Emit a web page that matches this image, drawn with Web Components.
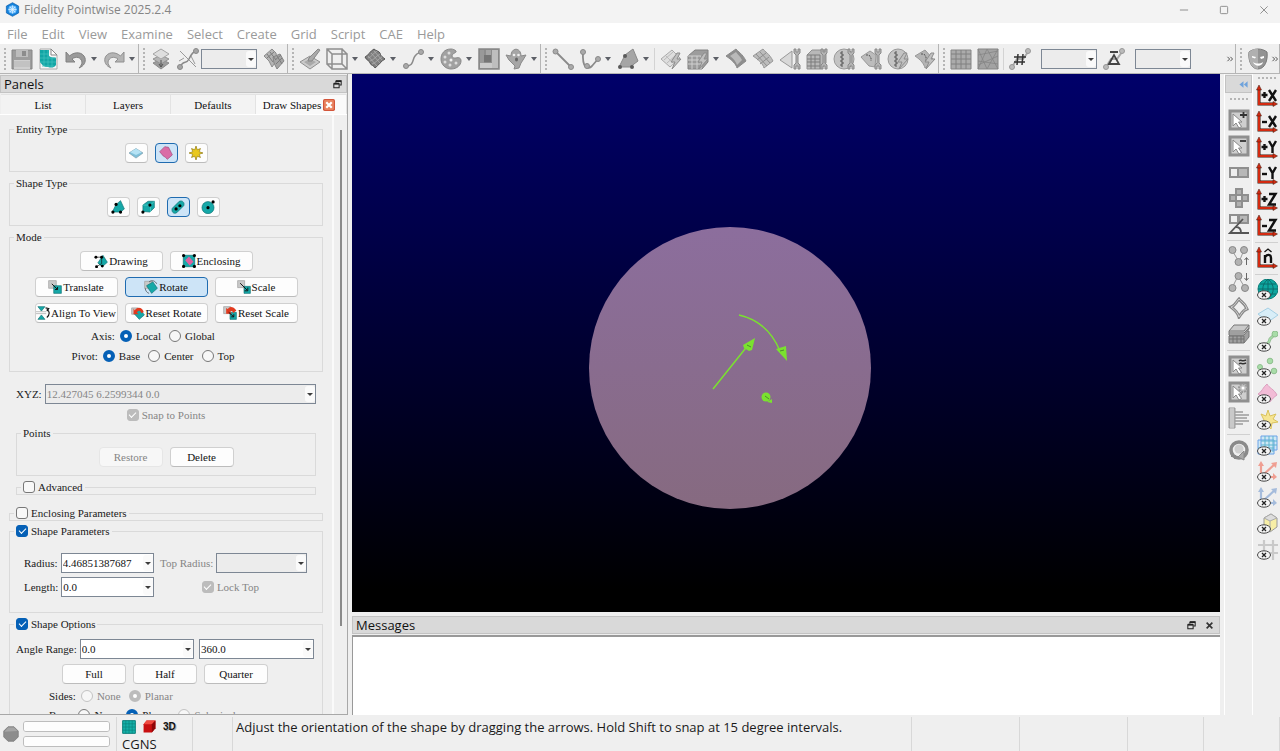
<!DOCTYPE html>
<html lang="en">
<head>
<meta charset="utf-8">
<title>Fidelity Pointwise 2025.2.4</title>
<style>
  html, body { margin: 0; height: 100%; }
  body {
    background: #efefef; color: #1a1a1a; overflow: hidden;
    font: 13px/18px "Open Sans", "Noto Sans", sans-serif;
    --form-font: 11px/14px "Liberation Serif", serif;
  }
</style>
</head>
<body>
<app-window></app-window>
<script>
/* ---------- icon artwork, all on a 22 x 22 grid ---------- */
const wrench = '<path d="M13 1v4l2 2v8l-2 2v4h2v-3h2v3h2v-4l-2-2V7l2-2V1h-2v3h-2V1z" transform="translate(2 0)" fill="#b4b4b4" stroke="#8a8a8a"/>';
const bolt = '<path d="M17 5l-6 9h4l-3 7 9-10h-4l3-6z" fill="#c0c0c0" stroke="#8c8c8c"/>';
const zip = '<path d="M9 3v16M7 5h2M9 7h2M7 9h2M9 11h2M7 13h2M9 15h2M7 17h2" stroke="#555" stroke-width="1" fill="none"/>';
const eye = '<ellipse cx="8" cy="16" rx="6.5" ry="4.2" fill="#f4f4f4" stroke="#444"/><path d="M6 14l4 4M10 14l-4 4" stroke="#222" stroke-width="1.3"/>';
const axis = t => `<path d="M3 4v15h15" fill="none" stroke="#3a1408" stroke-width="3"/><path d="M3 4v15h15" fill="none" stroke="#d42a10" stroke-width="2"/><path d="M0.500 5L3 0l2.500 5zM17 16.500l4.500 2.500-4.500 2.500z" fill="#d42a10" stroke="#3a1408" stroke-width=".5"/>${t}`;
const gX = '<path d="M13 5l7 11M20 5l-7 11"/>', gY = '<path d="M13 4l3.500 6 3.500-6M16.500 10v6"/>', gZ = '<path d="M13 5h6.500l-6.500 10.500h7"/>';
const plus = '<path d="M5.500 10h6M8.500 7v6"/>', minus = '<path d="M6 11h5"/>';
const ink = s => `<g fill="none" stroke="#111" stroke-width="2.4">${s}</g>`;
const plate = '<path d="M2 2h18v18H2z" fill="#cfcfcf" stroke="#8f8f8f" stroke-width="3"/>';
const cursor = '<path d="M5 5v12l3-3 3 5 2.500-1.500-3-4.500H14z" fill="#fff" stroke="#888"/>';
const blob = 'fill="#16a8a8" stroke="#0b6f70"';
const box = 'fill="#c9c9c9" stroke="#999"';
const ICONS = {
  app: '<path d="M11 1l9 5v10l-9 5-9-5V6z" fill="#1583dc" stroke="#0b5cab"/><circle cx="11" cy="11" r="6" fill="#7cc4ff"/><path d="M5 11h12M11 5v12M7 7l8 8M15 7l-8 8" stroke="#e9f6ff"/>',
  save: '<path d="M1 2h20v19H1z" fill="#9d9d9d" stroke="#858585"/><path d="M5 2h12v7H5z" fill="#bdbdbd"/><path d="M11 3h4v5h-4z" fill="#8c8c8c"/><path d="M3 12h16v9H3z" fill="#cfcfcf"/><path d="M3 14h16M3 16h16M3 18h16" stroke="#b5b5b5"/>',
  importgrid: '<path d="M2 1h11l6 6v14H2z" fill="#f6f6f6" stroke="#aaa"/><path d="M2 2h9v6c2 2 5 1 7 2v7c-2 3-5 3-8 2-4 0-6-2-8-5z" fill="#12a5a5"/><path d="M2 6h9M2 10h16M2 14h16M4 18h12M6 2v16M10 2v17M14 10v9" stroke="#3fc0bc" fill="none" stroke-width=".8"/><path d="M13 1v6h6z" fill="#fff" stroke="#888"/>',
  undo: '<path d="M1 4v10h9l-3-3c4-3 9-2 10 3 0 2-1 4-3 6 5-2 7-6 6-10C18 4 10 3 4.500 8z" fill="#9a9a9a" stroke="#808080"/>',
  redo: '<path d="M21 4v10h-9l3-3c-4-3-9-2-10 3 0 2 1 4 3 6-5-2-7-6-6-10C4 4 12 3 17.500 8z" fill="#b4b4b4" stroke="#909090"/>',
  layers: '<path d="M3 15l8-4 8 4-8 6z" fill="#9c9c9c" stroke="#8a8a8a"/><path d="M3 11l8-4 8 4-8 5z" fill="#b5b5b5" stroke="#929292"/><path d="M3 6l8-5 8 5-8 5z" fill="#dedede" stroke="#a5a5a5"/><path d="M11 12v7M9 16l2 3 2-3" stroke="#555" fill="none"/>',
  curveedit: '<path d="M3 3l16 16M2 13l5-3M14 8l4 8" stroke="#999"/><path d="M3 19c4-8 6-2 9-8s4-7 8-8" fill="none" stroke="#888" stroke-width="1.500"/><circle cx="3" cy="19" r="2.500" fill="#a5a5a5" stroke="#888"/><circle cx="19" cy="3" r="2.500" fill="#a5a5a5" stroke="#888"/>',
  meshswap: '<path d="M1 8l8-7 4 4 1 7-5 7-3-6z" fill="#b5b5b5" stroke="#8c8c8c"/><path d="M10 9l7-3 4 7-7 8-3-6z" fill="#a5a5a5" stroke="#858585"/><path d="M4 6l6 8M7 4l6 8M4 10l7-6M12 12l6-5M13 16l6-6M14 8l5 8" stroke="#7c7c7c"/>',
  plane: '<path d="M1 14l10-6 10 6-10 7z" fill="#cacaca" stroke="#909090"/><path d="M5 14l6-3 6 3-6 4z" fill="#a9a9a9"/><path d="M9 13l1-3 9-9 2 1-8 11z" fill="#aaa" stroke="#888"/>',
  cube: '<path d="M1 1h15v15H1zM6 6h15v15H6zM1 1l5 5M16 1l5 5M1 16l5 5M16 16l5 5" fill="none" stroke="#8f8f8f" stroke-width="1.500"/>',
  mesh: '<path d="M1 9c3-1 5-6 9-8 2 2 5 2 6 4 0 3 3 4 5 6-4 2-6 6-10 9-1-3-4-2-5-5 0-2-4-3-5-6z" fill="#808080" stroke="#555"/><path d="M4 10c4-1 5-5 9-7M6 13c4-1 6-5 10-7M8 16c4-1 6-5 10-7M4 8l9 10M7 5l9 10M10 3l8 9" fill="none" stroke="#b5b5b5" stroke-width=".7"/>',
  spline: '<path d="M4 18c8 0 6-6 9-10 2-3 4-3 6-4" fill="none" stroke="#8c8c8c" stroke-width="1.500"/><circle cx="4" cy="18" r="2.500" fill="#aaa" stroke="#888"/><circle cx="19" cy="4" r="2.500" fill="#aaa" stroke="#888"/>',
  palette: '<path d="M11 1C4 1 1 6 1 11c0 6 5 10 10 10 6 0 10-4 10-8 0-3-2-4-5-3-2 0-4 0-4-2 0-3 5-3 4-5-1-1-3-2-5-2z" fill="#a1a1a1" stroke="#888"/><g fill="#ddd"><circle cx="9" cy="5" r="1.500"/><circle cx="5" cy="9" r="1.500"/><circle cx="5" cy="14" r="1.500"/><circle cx="10" cy="17" r="1.500"/><circle cx="16" cy="15" r="1.500"/></g><circle cx="11" cy="12" r="1.500" fill="#efefef"/>',
  shade: '<path d="M1 1h20v20H1z" fill="#8d8d8d"/><path d="M2 2h4v14H2z" fill="#999"/><path d="M6 7h7v7H6z" fill="#757575"/><path d="M8 2h5v5H8z" fill="#a5a5a5"/><path d="M14 2h6v18h-6z" fill="#bebebe"/><path d="M2 15h12v5H2z" fill="#cacaca"/><path d="M1 1h20v20H1z" fill="none" stroke="#888" stroke-width="1.500"/>',
  ghost: '<path d="M6 8c0-9 10-9 10 0l5-1-3 5-2 3-2 5-5 1 1-3-6-6-3-5z" fill="#a6a6a6" stroke="#8a8a8a"/><circle cx="9" cy="7" r="1.300" fill="#eee"/><circle cx="13.500" cy="7" r="1.300" fill="#eee"/><ellipse cx="11.500" cy="11.500" rx="1.500" ry="2" fill="#666"/>',
  line: '<path d="M4 4l15 15" stroke="#8a8a8a" stroke-width="1.800"/><circle cx="3.500" cy="3.500" r="2.500" fill="#aaa" stroke="#8a8a8a"/><circle cx="19" cy="19" r="2.500" fill="#aaa" stroke="#8a8a8a"/>',
  arc: '<path d="M4 4c-1 17 5 18 9 14l6-7" fill="none" stroke="#8a8a8a" stroke-width="1.800"/><circle cx="4" cy="4" r="2.500" fill="#aaa" stroke="#8a8a8a"/><circle cx="8" cy="18" r="2.500" fill="#aaa" stroke="#8a8a8a"/><circle cx="19" cy="11" r="2.500" fill="#aaa" stroke="#8a8a8a"/>',
  polysurf: '<path d="M2 19L8 7l8-6 5 12-8 6z" fill="#a5a5a5" stroke="#8a8a8a"/><g fill="#5a5a5a"><circle cx="8" cy="8" r="2"/><circle cx="3" cy="19" r="2"/><circle cx="15" cy="19" r="2"/></g>',
  bolt1: '<path d="M1 11l11-9 8 8-10 9z" fill="#dedede" stroke="#aaa"/><path d="M4 12l9-8M7 15l9-8M6 8l8 8" stroke="#bbb"/>' + bolt,
  bolt2: '<path d="M1 8l7-6h13v12l-6 7H1z" fill="#9c9c9c" stroke="#808080"/><path d="M1 12h13M1 16h13M5 8v13M10 8v13M1 8h13v13" stroke="#d0d0d0" fill="none"/>' + bolt,
  surf1: '<path d="M1 8l10-7c2 3 6 4 10 12l-9 7c-1-4-5-8-11-12z" fill="#8e8e8e" stroke="#8a8a8a"/><path d="M5 8l6-4c1 2 4 4 6 8l-5 5c-1-3-3-6-7-9z" fill="#b9b9b9"/>',
  surf2: '<path d="M1 8l10-7c2 3 6 4 10 12l-9 7c-1-4-5-8-11-12z" fill="#bcbcbc" stroke="#999"/><path d="M4 6l11 12M8 4l10 11M5 12l9-7M8 16l9-7" stroke="#8f8f8f" fill="none"/>',
  wr1: '<path d="M1 12L13 3v17z" fill="#d8d8d8" stroke="#999"/>' + wrench,
  wr2: '<path d="M1 7l5-5h14v13l-5 6H1z" fill="#b8b8b8" stroke="#909090"/><path d="M1 11h13M1 14h13M1 18h13M5 7v14M9 7v14M1 7h13v14" stroke="#7c7c7c" fill="none"/>' + wrench,
  wr3: '<circle cx="11" cy="11" r="10" fill="#c3c3c3" stroke="#999"/>' + zip + wrench,
  wr4: '<path d="M1 9l9-6 6 4-1 12-6-1z" fill="#bcbcbc" stroke="#999"/><path d="M6 7h3l2 3v3" stroke="#555" fill="none" stroke-dasharray="2 1"/>' + wrench,
  wr5: '<circle cx="11" cy="11" r="10" fill="#c3c3c3" stroke="#999"/>' + zip + bolt,
  wr6: '<path d="M1 8l10-6 9 10-9 8c-1-4-4-8-10-12z" fill="#b4b4b4" stroke="#999"/><path d="M7 6h3l2 3v4" stroke="#555" fill="none" stroke-dasharray="2 1"/>' + bolt,
  grid: '<path d="M1 2h20v19H1z" fill="#ababab" stroke="#858585"/><path d="M1 6h20M1 11h20M1 16h20M6 2v19M11 2v19M16 2v19" stroke="#808080"/>',
  trigrid: '<path d="M1 1h20v20H1z" fill="#a3a3a3" stroke="#858585"/><path d="M1 7l20-4M1 13l20 3M1 1l9 20 11-20M1 21L10 1l11 20M1 17l20-9" stroke="#858585" stroke-width=".8" fill="none"/>',
  hash: '<path d="M3 19l5-8 6 0 5-7" fill="none" stroke="#aaa" stroke-width="2"/><circle cx="3" cy="19" r="2.500" fill="#bbb" stroke="#999"/><circle cx="19" cy="3" r="2.500" fill="#bbb" stroke="#999"/><path d="M9 6l-1 11M14 6l-1 11M5 9h12M5 14h11" stroke="#333" stroke-width="1.500"/>',
  delta: '<path d="M3 19l5-8 6 0 5-7" fill="none" stroke="#aaa" stroke-width="2"/><circle cx="3" cy="19" r="2.500" fill="#bbb" stroke="#999"/><circle cx="19" cy="3" r="2.500" fill="#bbb" stroke="#999"/><path d="M7 4h8M6 16l5-9 5 9z" stroke="#444" stroke-width="1.800" fill="none"/>',
  mask: '<path d="M2 4c5-4 13-4 18 0 1 8-2 17-9 17S1 12 2 4z" fill="#939393" stroke="#787878"/><path d="M2 4c5-4 6-3 9-3v20C4 21 1 12 2 4z" fill="#b0b0b0"/><path d="M5 8l4 1-1 1.500-3-1zM13 9l4-1v2l-3 1zM6 14c3 2 7 2 10 0-1 5-8 5-10 0z" fill="#fff"/>',
  selplus: plate + cursor + '<path d="M12 6h7M15.500 3v6" stroke="#333" stroke-width="1.800"/>',
  selminus: plate + cursor + '<path d="M12 6h6" stroke="#333" stroke-width="1.800"/>',
  toggle: '<path d="M1 6h20v11H1z" fill="#8f8f8f"/><path d="M3 8h6v7H3z" fill="#eee"/><path d="M11 8h8v7h-8z" fill="#b7b7b7"/>',
  cross: '<path d="M7 1h8v6h6v8h-6v6H7v-6H1V7h6z" fill="#8f8f8f"/><path d="M9 3h4v4H9zM3 9h4v4H3zM15 9h4v4h-4zM9 15h4v4H9z" fill="#b0b0b0"/><path d="M9 9h4v4H9z" fill="#eee"/>',
  angle: '<path d="M1 1h20v10H1z" fill="#8f8f8f"/><path d="M3 3h6v6H3z" fill="#eee"/><path d="M12 3h7v6h-7z" fill="#b7b7b7"/><path d="M15 6L2 20h19M8 14c4 0 5 3 5 6" fill="none" stroke="#555" stroke-width="1.800"/>',
  nodesup: '<path d="M4 5l7 12 5-12" fill="none" stroke="#999"/><g fill="#b2b2b2" stroke="#888"><circle cx="4.500" cy="5" r="3.500"/><circle cx="16" cy="5" r="3.500"/><circle cx="10.500" cy="17" r="3.500"/></g><path d="M18.500 20v-7M16.500 15l2-2.500 2 2.500" stroke="#666" fill="none"/>',
  nodesdown: '<path d="M4 17l6-12 7 12" fill="none" stroke="#999"/><g fill="#b2b2b2" stroke="#888"><circle cx="10.500" cy="5" r="3.500"/><circle cx="4.500" cy="17" r="3.500"/><circle cx="17" cy="17" r="3.500"/></g><path d="M18.500 2v7M16.500 7l2 2.500 2-2.500" stroke="#666" fill="none"/>',
  loop: '<path d="M3 10c4-1 5-5 8-8 2 3 6 4 8 10-4 1-5 4-8 8-1-4-4-7-8-10z" fill="none" stroke="#888" stroke-width="3"/><path d="M3 10c4-1 5-5 8-8 2 3 6 4 8 10-4 1-5 4-8 8-1-4-4-7-8-10z" fill="none" stroke="#d0d0d0"/>',
  stack: '<path d="M1 13l5-5h15v6l-5 6H1z" fill="#a0a0a0" stroke="#777"/><path d="M1 13h15v7M1 16h15M5 13v7M9 13v7M13 13v7" fill="none" stroke="#707070"/><path d="M1 8l5-6h15v4l-5 6H1z" fill="#c9c9c9" stroke="#777"/><path d="M1 8h15l5-6M1 10h15l5-5" fill="none" stroke="#777"/>',
  selwave: plate + cursor + '<path d="M11 6c2-2 3 1 7-1M11 9c2-2 3 1 7-1" stroke="#333" stroke-width="1.500" fill="none"/>',
  selgear: plate + cursor + '<circle cx="15" cy="7" r="4" fill="#c0c0c0" stroke="#999" stroke-width="2" stroke-dasharray="2 1"/><circle cx="15" cy="7" r="1.500" fill="#fff"/>',
  bars: '<path d="M1 1h6v20H1z" fill="#b5b5b5" stroke="#999"/><path d="M3 1v20M5 1v20" stroke="#ddd"/><path d="M7 5h8M7 8h14M7 11h12M7 14h14M7 17h8" stroke="#9c9c9c" stroke-width="1.500"/>',
  rotate: '<circle cx="11" cy="11" r="8" fill="none" stroke="#8a8a8a" stroke-width="3.500"/><circle cx="11" cy="10" r="4.500" fill="#cfcfcf"/><path d="M16 12l-6 6 6 3z" fill="#a9a9a9" stroke="#888"/><path d="M3 17h4v3" fill="none" stroke="#888" stroke-width="2"/>',
  px: axis(ink(plus + gX)), mx: axis(ink(minus + gX)), py: axis(ink(plus + gY)), my: axis(ink(minus + gY)), pz: axis(ink(plus + gZ)), mz: axis(ink(minus + gZ)),
  nhat: axis(ink('<path d="M9 16V8v2c2-3 6-3 6 1v5"/><path d="M8.500 5L12 2l3.500 3" stroke-width="1.300"/>')),
  globe: '<circle cx="12" cy="10" r="10" fill="#0ea7a0" stroke="#0b7f7a"/><path d="M2 10h20M4 5h16M4 15h16M12 0v20M12 0c-7 6-7 14 0 20M12 0c7 6 7 14 0 20" fill="none" stroke="#0b6d6c"/>' + eye,
  eplane: '<path d="M2 9l10-6 10 7-10 7z" fill="#d8eef8" stroke="#a5cfe4"/>' + eye,
  ecurve: '<path d="M3 13c9 2 10-1 11-5l5-5" fill="none" stroke="#8fb88f" stroke-width="3"/><path d="M3 13c9 2 10-1 11-5l5-5" fill="none" stroke="#a8dca8" stroke-width="1.500"/><circle cx="19" cy="3" r="3" fill="#a8dca8" stroke="#8fbf8f"/>' + eye,
  epoints: '<g fill="#a8dca8" stroke="#8fbf8f"><circle cx="14" cy="4" r="2.800"/><circle cx="4" cy="10" r="2.500"/><circle cx="18" cy="14" r="2.800"/></g>' + eye,
  esurf: '<path d="M2 11c4-2 5-7 9-10 2 4 7 5 10 11-3 2-5 4-7 7z" fill="#f2bcd6" stroke="#dba0bf"/>' + eye,
  estar: '<path d="M12 1l2 6 6-2-3 5 5 3-6 1-1 6-4-4-6-1 3-4-3-6 5 2z" fill="#f6e592" stroke="#d9c25d"/>' + eye,
  egrid: '<path d="M5 1h16v14H5zM2 5h16v14H2z" fill="#cfe8f4" stroke="#6aa2e8"/><path d="M5 6h16M5 10h16M9 1v16M13 1v16M17 1v16M2 13h16" stroke="#5fb5d0" fill="none"/>' + eye,
  eaxr: '<path d="M5 3v13h14M7 14L19 3" fill="none" stroke="#ef9f92" stroke-width="2.200"/><path d="M2 5l3-5 3 5zM17 12l4 4-4 3zM15 2l6-1-1 6z" fill="#ef9f92"/>' + eye,
  eaxb: '<path d="M5 3v13h14M7 14L19 3" fill="none" stroke="#a5bcdc" stroke-width="2.200"/><path d="M2 5l3-5 3 5zM17 12l4 4-4 3zM15 2l6-1-1 6z" fill="#a5bcdc"/>' + eye,
  ecube: '<path d="M8 5l7-4 6 4v9l-7 5-6-4z" fill="#f7eea6" stroke="#999"/><path d="M8 5l6 3 7-3-6-4z" fill="#ddd" stroke="#aaa"/><path d="M14 8v11" stroke="#aaa"/>' + eye,
  ecross: '<path d="M8 1v20M17 1v20M2 6h20M2 14h20" stroke="#c9c9c9" stroke-width="2.200"/>' + eye,
  blockblue: '<path d="M0 11L11 4l11 7-11 8z" fill="#7fc0da" stroke="#7a9aa8"/><path d="M2 10l9-6 9 6-9 4z" fill="#b5e2f4"/>',
  domain: '<path d="M1 9l8-8c2 1 4 0 6 1l6 12-8 7c-2-3-4-4-6-5z" fill="#da6ca6" stroke="#9a4675"/>',
  star: '<path d="M11 0l2 6 5-2-2 5 6 2-6 2 2 5-5-2-2 6-2-6-5 2 2-5-6-2 6-2-2-5 5 2z" fill="#e9c81c" stroke="#8a7408"/>',
  poly: `<path d="M2 19L8 7l7-6 6 13-6 5z" ${blob}/><circle cx="8" cy="7" r="2.500"/><circle cx="3" cy="19" r="2.500"/><circle cx="15" cy="19" r="2.500"/>`,
  solid: `<path d="M3 18V8l8-6 10 0v10l-7 7z" ${blob}/><path d="M3 8h12l6-6M15 8v11" fill="none" stroke="#5fd6d0"/><circle cx="3" cy="19" r="2.500"/><circle cx="14" cy="8" r="2.500"/>`,
  cyl: `<path d="M2 13L13 2c5-2 9 2 7 7L9 20c-5 3-9-2-7-7z" ${blob}/><circle cx="8" cy="14" r="2.500"/><circle cx="14" cy="9" r="2.500"/>`,
  ball: `<circle cx="11" cy="12" r="9.500" ${blob}/><circle cx="11" cy="12" r="2.500"/><circle cx="19" cy="3" r="2.500"/>`,
  drawing: `<path d="M6 14L14 2l7 11-8 7z" ${blob}/><path d="M2 5h10M12 5v10L4 20" stroke="#111" fill="none"/><circle cx="3" cy="5" r="2.300"/><circle cx="12" cy="5" r="2.300"/><circle cx="4" cy="20" r="2.300"/><circle cx="13" cy="19" r="2.300"/>`,
  enclosing: `<path d="M2 2h18v18H2z" ${blob}/><path d="M5 10l6-6 7 8-6 6z" fill="#e05fa0"/><circle cx="2.500" cy="2.500" r="2.500"/><circle cx="19.500" cy="2.500" r="2.500"/><circle cx="2.500" cy="19.500" r="2.500"/><circle cx="19.500" cy="19.500" r="2.500"/>`,
  translate: `<path d="M1 1h12v12H1z" ${box}/><path d="M9 9h12v12H9z" ${blob}/><path d="M6 6l9 9M15 11v4h-4" stroke="#111" stroke-width="1.500" fill="none"/>`,
  rotateshape: `<path d="M1 2h12v11H1z" ${box}/><path d="M4 9L14 3l7 10-9 8z" ${blob}/><path d="M8 3c5-4 10-1 12 3M2 13c0 4 3 7 6 8" stroke="#333" fill="none"/>`,
  scale: `<path d="M1 1h11v11H1z" ${box}/><path d="M11 10h10v11H11z" ${blob}/><path d="M5 5l11 11M17 12v5h-5" stroke="#111" stroke-width="1.500" fill="none"/>`,
  alignview: `<path d="M3 1h11L8.500 8zM3 21h11L8.500 14z" ${blob}/><path d="M0 9h16M0 12h16" stroke="#999" fill="none"/><path d="M17 5c5 3 5 9 0 13M15 3l5 1-3 4" fill="none" stroke="#111" stroke-width="1.800"/>`,
  resetrotate: `<path d="M1 3h10v10H1z" ${box}/><path d="M5 12l9-7 7 9-8 7z" ${blob}/><path d="M20 10c-1-8-11-10-14-3l-2-3v9h8l-3-3c3-4 6-3 7 1z" fill="#e23a1e"/>`,
  resetscale: `<path d="M1 1h11v11H1z" ${box}/><path d="M11 10h10v11H11z" ${blob}/><path d="M16 11l5-4C16-1 8 1 8 5L5 3v9h9l-3-3c2-2 4-1 5 2z" fill="#e23a1e"/><path d="M9 10l8 7M17 13v4h-4" stroke="#111" fill="none" stroke-width="1.500"/>`,
  float: '<path d="M7 2h13v10h-4M7 2v5" fill="none" stroke="#222" stroke-width="2.500"/><path d="M2 9h13v10H2z" fill="none" stroke="#222" stroke-width="2.500"/><path d="M2 9h13M7 3h13" stroke="#222" stroke-width="4"/>',
  x: '<path d="M4 4l14 14M18 4L4 18" stroke="#333" stroke-width="4"/>',
  back: '<path d="M11 3v16L1 11zM21 3v16l-9-8z" fill="#6fa3dc"/>',
  closetab: '<rect width="22" height="22" rx="3" fill="#d3553a"/><rect x="2" y="2" width="18" height="18" rx="2" fill="#e8825f"/><path d="M6 6l10 10M16 6L6 16" stroke="#fff" stroke-width="4"/>',
  octagon: '<path d="M7 1h8l6 6v8l-6 6H7l-6-6V7z" fill="#8c8c8c" stroke="#777"/><path d="M7 2h8l5 5-18 1z" fill="#a5a5a5"/>',
  tealgrid: '<path d="M1 1h20v20H1z" fill="#14b0a8" stroke="#0a7f7a" stroke-width="1.500"/><path d="M1 6h20M1 11h20M1 16h20M6 1v20M11 1v20M16 1v20" stroke="#0a7f7a"/>',
  redcube: '<path d="M1 7l5-6h15v13l-6 7H1z" fill="#c80f10"/><path d="M1 7l5-6h15l-6 6z" fill="#f04a40"/><path d="M15 7l6-6v13l-6 7z" fill="#8e0608"/>',
  more: '<path d="M4 5l6 6-6 6M12 5l6 6-6 6" fill="none" stroke="#444" stroke-width="2.500"/>',
  min: '<path d="M2 11h18" stroke="#888" stroke-width="2"/>',
  max: '<rect x="3" y="3" width="16" height="16" rx="2" fill="none" stroke="#888" stroke-width="2"/>',
  close: '<path d="M3 3l16 16M19 3L3 19" stroke="#888" stroke-width="2"/>'
};
/* ---------- base class ---------- */
class Base extends HTMLElement {
  connectedCallback() {
    if (this.shadowRoot) return;
    this.attachShadow({ mode: 'open' }).innerHTML =
      `<style>*{box-sizing:border-box}${this.css()}</style>${this.html()}`;
  }
  at(n, d = '') { return this.getAttribute(n) ?? d; }
}
const define = (n, css, html) => customElements.define(n, class extends Base {
  css() { return typeof css === 'function' ? css(this) : css; }
  html() { return html(this); }
});

define('ui-icon', e => `:host{display:block;flex:none;width:${e.at('size', '22')}px;height:${e.at('size', '22')}px}svg{display:block;width:100%;height:100%}`,
  e => `<svg viewBox="0 0 22 22" aria-hidden="true">${ICONS[e.at('name')] || ''}</svg>`);

define('title-bar', `:host{display:flex;align-items:center;height:23px;padding:0 11px 4px 5px;background:#f3f3f3;color:#858585;font-size:12px}
  span{flex:1;padding-left:4px}
  button{border:0;padding:0;background:none;width:10px;height:10px;margin-left:30px}`,
  () => `<ui-icon name="app" size="15"></ui-icon><span>Fidelity Pointwise 2025.2.4</span>
  ${['min', 'max', 'close'].map(n => `<button aria-label="${n}"><ui-icon name="${n}" size="10"></ui-icon></button>`).join('')}`);

define('menu-bar', `:host{display:block;background:#fff}
  nav{display:flex;gap:14px;height:21px;padding:0 7px;align-items:center}
  a{color:#9a9a9a;text-decoration:none}`,
  () => `<nav>${['File', 'Edit', 'View', 'Examine', 'Select', 'Create', 'Grid', 'Script', 'CAE', 'Help'].map(t => `<a href="#${t}">${t}</a>`).join('')}</nav>`);

define('tool-button', `:host{display:flex;flex:none;align-items:center}
  button{border:0;background:none;padding:0;width:27px;height:26px;display:grid;place-items:center}
  :host([menu])::after{content:"";border:3px solid transparent;border-top:4px solid #5c5f66;border-bottom:0;margin:0 3px 0 2px}`,
  e => `<button aria-label="${e.at('icon')}"><ui-icon name="${e.at('icon')}"></ui-icon></button>`);

define('tool-group', `:host{display:flex;flex:none;align-items:center;height:30px;border-right:1px solid #b5b5b5}
  :host([grow]){flex:1 0 auto}
  i{flex:none;width:3px;height:23px;margin:0 2px 0 3px;background:repeating-linear-gradient(#b5b5b5 0 2px,transparent 2px 4px) 1px 0/2px 100% no-repeat}
  ::slotted(hr){border:0;width:1px;height:22px;background:#d3d3d3;margin:0 2px;flex:none} ::slotted(.end){margin:0 1px 0 auto}`,
  () => `<i></i><slot></slot>`);

const ARROW = `.a{grid-area:1/1;justify-self:end;align-self:stretch;width:10px;margin:2px 1px;border-radius:3px;background:#fafafa;display:grid;place-items:center;pointer-events:none}
  .a::before{content:"";border:3px solid transparent;border-top-color:#3c3c3c;border-bottom:0}`;
define('combo-box', e => `:host{display:flex;align-items:center;min-width:0;font:var(--form-font)}
  label{white-space:nowrap;text-align:right;margin-right:3px}
  :host([disabled]){color:#858585}
  .f{display:grid;height:20px;flex:1;min-width:0}
  select{grid-area:1/1;width:100%;height:20px;appearance:none;border:1px solid #7d8794;border-radius:0;background:#fff;color:#111;font:inherit;padding:0 12px 0 1px;margin:0;opacity:1}
  select:disabled,:host([flat]) select{background:#ececec;color:#858585}
  ${ARROW}`,
  e => `${e.at('label') ? `<label for="s">${e.at('label')}</label>` : ''}<div class="f"><select id="s" aria-label="${e.at('label', 'value')}" ${e.hasAttribute('disabled') ? 'disabled' : ''}><option>${e.at('value')}</option></select><span class="a"></span></div>`);

define('push-button', `:host{display:block;flex:none}
  button{width:100%;height:20px;display:flex;align-items:center;justify-content:center;gap:1px;padding:0;border:1px solid #d0d0d0;border-bottom-color:#bcbcbc;border-radius:4px;background:#fdfdfd;color:#111;font:var(--form-font);white-space:nowrap}
  :host([on]) button{background:#cde4f7;border-color:#1f6bb0}
  button:disabled{color:#858585;background:#f7f7f7;border-color:#e6e6e6}`,
  e => `<button ${e.hasAttribute('disabled') ? 'disabled' : ''} aria-label="${e.at('text', e.at('icon'))}">${e.at('icon') ? `<ui-icon name="${e.at('icon')}" size="14"></ui-icon>` : ''}${e.at('text')}</button>`);

define('radio-group', `:host{display:flex;align-items:center;height:14px;font:var(--form-font)}
  label{display:flex;align-items:center;gap:4px;margin-left:8px}
  .t{margin-right:-3px}
  input{appearance:none;margin:0;width:12px;height:12px;border-radius:50%;border:1px solid #777;background:#f7f7f7}
  input:checked{border:4px solid #0560b6;background:#fff}
  label.d{color:#858585} .d input{border-color:#c3c3c3} .d input:checked{border-color:#bcbcbc}`,
  e => {
    const off = e.at('off').split(',');
    return `<span class="t">${e.at('label')}</span>` + e.at('options').split(',').map(o =>
      `<label class="${off.includes(o) ? 'd' : ''}"><input type="radio" name="r" ${o === e.at('value') ? 'checked' : ''} ${off.includes(o) ? 'disabled' : ''}>${o}</label>`).join('');
  });

define('check-option', `:host{display:block;font:var(--form-font)}
  label{display:flex;align-items:center;gap:3px;height:14px}
  input{appearance:none;margin:0;width:12px;height:12px;border:1px solid #777;border-radius:3px;background:#f8f8f8;display:grid;place-items:center}
  input:checked{background:#0560b6;border-color:#0560b6}
  input:checked::before{content:"";width:6px;height:3px;border:solid #fff;border-width:0 0 1px 1px;transform:translateY(-1px) rotate(-45deg)}
  :host([disabled]){color:#858585} :host([disabled]) input{background:#bcbcbc;border-color:#bcbcbc}`,
  e => `<label><input type="checkbox" ${e.hasAttribute('checked') ? 'checked' : ''} ${e.hasAttribute('disabled') ? 'disabled' : ''}>${e.at('text')}</label>`);

define('group-box', `:host{display:block;font:var(--form-font)}
  fieldset{margin:0;min-width:0;border:1px solid #dadada;padding:7px 0 8px;display:flow-root}
  legend{margin-left:4px;padding:0 2px;height:14px}
  :host([empty]) fieldset{padding:0;height:14px}`,
  e => `<fieldset><legend>${e.hasAttribute('check') ? `<check-option text="${e.at('text')}" ${e.hasAttribute('checked') ? 'checked' : ''}></check-option>` : e.at('text')}</legend><slot></slot></fieldset>`);

define('dock-title', `:host{display:flex;align-items:center;height:18px;border:1px solid #c3c3c3;background:#d9d9d9;padding:0 4px 0 3px;color:#111;font-size:13px}
  span{flex:1} button{border:0;background:none;padding:0;margin-left:9px}`,
  e => `<span>${e.at('text')}</span>${e.at('actions').split(',').map(a => `<button aria-label="${a}"><ui-icon name="${a}" size="9"></ui-icon></button>`).join('')}`);

define('panel-tabs', `:host{display:flex;height:20px;margin:1px 0 0 1px;font:var(--form-font)}
  button{flex:1;border:1px solid #e3e3e3;border-width:1px 1px 0 0;background:#f3f3f3;font:inherit;color:#111;padding:0;display:flex;align-items:center;justify-content:center;gap:3px}
  button[aria-selected=true]{background:#fafafa;flex:0 0 91px;padding-right:4px;gap:2px}`,
  () => `${['List', 'Layers', 'Defaults'].map(t => `<button role="tab">${t}</button>`).join('')}<button role="tab" aria-selected="true">Draw Shapes<ui-icon name="closetab" size="12"></ui-icon></button>`);

define('shape-panel', `:host{display:flex;flex:1;min-height:0;border-top:1px solid #fff}
  .scroll{flex:1;overflow:hidden;padding:7px 9px 0;min-width:0}
  .rail{width:15px;border-left:2px solid #fafafa;padding-top:15px}
  .thumb{width:2px;height:85%;margin-left:6px;background:#8a8a8a}
  group-box{margin-bottom:4px} group-box[empty]{margin-bottom:3px}
  .r{display:flex;justify-content:center;gap:7px}
  .col{display:grid;gap:6px}
  .icons push-button{width:23px} .four{padding-right:6px}
  .m push-button{width:83px}
  .w push-button{width:64px}
  .sub{margin:12px 7px 11px;display:grid;gap:4px} .sub group-box{margin:0}
  .snap{display:flex;justify-content:center} radio-group{margin-right:26px}
  .params{display:grid;grid-template-columns:144px 147px;gap:4px 6px;padding:8px 0 7px}
  .params combo-box.l{margin-left:14px} .params check-option{justify-self:end;margin:3px 48px 0 0}
  .opt{display:grid;gap:5px;padding:1px 8px 0 6px}
  .opt .ang{display:grid;grid-template-columns:178px 1fr;gap:5px}
  .opt radio-group{margin-left:33px}`,
  () => `<div class="scroll">
  <group-box text="Entity Type"><div class="r icons"><push-button icon="blockblue"></push-button><push-button icon="domain" on></push-button><push-button icon="star"></push-button></div></group-box>
  <group-box text="Shape Type"><div class="r icons four"><push-button icon="poly"></push-button><push-button icon="solid"></push-button><push-button icon="cyl" on></push-button><push-button icon="ball"></push-button></div></group-box>
  <group-box text="Mode"><div class="col">
    <div class="r m"><push-button icon="drawing" text="Drawing"></push-button><push-button icon="enclosing" text="Enclosing"></push-button></div>
    <div class="r m"><push-button icon="translate" text="Translate"></push-button><push-button icon="rotateshape" text="Rotate" on></push-button><push-button icon="scale" text="Scale"></push-button></div>
    <div class="r m"><push-button icon="alignview" text="Align To View"></push-button><push-button icon="resetrotate" text="Reset Rotate"></push-button><push-button icon="resetscale" text="Reset Scale"></push-button></div>
    <div class="r"><radio-group label="Axis:" options="Local,Global" value="Local"></radio-group></div>
    <div class="r"><radio-group label="Pivot:" options="Base,Center,Top" value="Base"></radio-group></div>
  </div></group-box>
  <div class="sub">
    <combo-box label="XYZ:" value="12.427045 6.2599344 0.0" flat></combo-box>
    <div class="snap"><check-option text="Snap to Points" checked disabled></check-option></div>
    <group-box text="Points"><div class="r w"><push-button text="Restore" disabled></push-button><push-button text="Delete"></push-button></div></group-box>
    <group-box text="Advanced" check empty></group-box>
  </div>
  <group-box text="Enclosing Parameters" check empty></group-box>
  <group-box text="Shape Parameters" check checked><div class="params">
    <combo-box class="l" label="Radius:" value="4.46851387687"></combo-box><combo-box label="Top Radius:" disabled></combo-box>
    <combo-box class="l" label="Length:" value="0.0"></combo-box><check-option text="Lock Top" checked disabled></check-option>
  </div></group-box>
  <group-box text="Shape Options" check checked><div class="opt">
    <div class="ang"><combo-box label="Angle Range:" value="0.0"></combo-box><combo-box value="360.0"></combo-box></div>
    <div class="r w"><push-button text="Full"></push-button><push-button text="Half"></push-button><push-button text="Quarter"></push-button></div>
    <radio-group label="Sides:" options="None,Planar" value="Planar" off="None,Planar"></radio-group>
    <radio-group label="Base:" options="None,Planar,Spherical" value="Planar" off="Spherical"></radio-group>
  </div></group-box>
  </div><div class="rail"><div class="thumb"></div></div>`);

define('view-port', `:host{display:block;flex:1;min-height:0;background:linear-gradient(#00006a,#000032 50%,#000 96%)}svg{display:block;width:100%;height:100%}`,
  () => `<svg viewBox="0 0 868 538" role="img" aria-label="Shape preview">
  <defs><linearGradient id="g" x2="0" y2="1"><stop stop-color="#8c6e9d"/><stop offset="1" stop-color="#866a80"/></linearGradient></defs>
  <circle cx="378" cy="294" r="141" fill="url(#g)"/>
  <g fill="none" stroke="#7ae22f" stroke-width="1.500"><path d="M361 315l36-45M387 241c22 5 34 19 41 36"/></g>
  <g fill="#7ae22f"><path d="M403 264l-12 7 1 3 5 3 3-1zM424 275l10-3 1 15z"/><circle cx="414" cy="323" r="4.500"/><path d="M415 328l5-3 0 4z"/></g>
  <path d="M395 271l4 2M428 277l4-1M413 322l4 3" stroke="#4c8c2c"/></svg>`);

define('side-column', `:host{display:block;width:28px;flex:none;border-left:1px solid #fff}
  .h{height:2px;margin:3px 4px 4px 5px;background:repeating-linear-gradient(90deg,#b5b5b5 0 2px,transparent 2px 4px)}
  .back+.h{margin-bottom:7px}
  tool-button{height:26px}
  hr{border:0;height:1px;background:#d0d0d0;margin:3px 2px 2px}
  .back{width:27px;height:18px;border:1px solid #c3c3c3;background:#d9d9d9;display:flex;justify-content:flex-end;align-items:center;padding:0 3px;margin:1px 0 5px}`,
  e => `${e.hasAttribute('back') ? '<button class="back" aria-label="Collapse"><ui-icon name="back" size="9"></ui-icon></button>' : ''}<div class="h"></div>` +
    e.at('icons').split(' ').map(n => n === '|' ? '<hr>' : `<tool-button icon="${n}"></tool-button>`).join(''));

define('status-bar', `:host{display:flex;height:36px;background:#efefef;color:#1a1a1a;font-size:13px}
  div{border-right:1px solid #d8d8d8;flex:none;margin-top:2px}
  .p{width:117px;display:flex;align-items:center;gap:4px;padding:0 6px 0 3px}
  .bars{flex:1;display:grid;gap:4px;border:0;margin:0}
  progress{appearance:none;display:block;width:100%;height:11px;border:1px solid #bdbdbd;border-radius:3px;background:#fdfdfd;overflow:hidden}
  progress::-webkit-progress-bar{background:#fdfdfd}
  .c{width:76px;padding:2px 5px 0;display:grid;gap:1px;align-content:start}
  .i{border:0;margin:0;display:flex;gap:7px;align-items:center;height:15px}
  b{font:bold 10px/12px "Liberation Sans",sans-serif;color:#111;text-shadow:1px 1px #aaa}
  .m{flex:1;padding:1px 3px}
  .s{width:40px}.l{width:108px}.n{width:76px}`,
  () => `<div class="p"><ui-icon name="octagon" size="16"></ui-icon><div class="bars"><progress value="0"></progress><progress value="0"></progress></div></div>
  <div class="c"><div class="i"><ui-icon name="tealgrid" size="14"></ui-icon><ui-icon name="redcube" size="13"></ui-icon><b>3D</b></div><span>CGNS</span></div>
  <div class="s"></div>
  <div class="m">Adjust the orientation of the shape by dragging the arrows. Hold Shift to snap at 15 degree intervals.</div>
  <div class="l"></div><div class="l"></div><div class="n"></div><div class="n"></div>`);

define('app-window', `:host{display:flex;flex-direction:column;height:100vh}
  .tools{display:flex;height:30px;background:#efefef;border-bottom:1px solid #b5b5b5;overflow:hidden}
  .tools combo-box{width:56px;margin-right:3px} .tools .gap{margin-left:8px}
  .work{flex:1;display:flex;min-height:0}
  .left{width:348px;flex:none;display:flex;flex-direction:column;border:solid #a8a8a8;border-width:0 1px 1px 0;padding-top:1px}
  .mid{flex:1;min-width:0;display:flex;flex-direction:column;margin:0 4px}
  dock-title{flex:none}
  .mid dock-title{margin:4px 0 1px;height:18px;padding-right:5px}
  textarea{border:1px solid #999;border-width:2px 0 0 1px;background:#fff;height:80px;resize:none;width:100%;margin:0;display:block;outline:0}`,
  () => {
    const t = s => s.split(' ').map(n => n === '|' ? '<hr>' : `<tool-button icon="${n.replace('+', '')}" ${n.endsWith('+') ? 'menu' : ''}></tool-button>`).join('');
    return `<title-bar></title-bar><menu-bar></menu-bar>
  <div class="tools">
    <tool-group>${t('save importgrid undo+ redo+')}</tool-group>
    <tool-group>${t('layers curveedit')}<combo-box flat></combo-box>${t('meshswap')}</tool-group>
    <tool-group>${t('plane cube+ mesh+ spline+ palette+ shade ghost+')}</tool-group>
    <tool-group>${t('line arc+ polysurf+ | bolt1 bolt2+ surf1 surf2 wr1 wr2 wr3 wr4 wr5 wr6')}</tool-group>
    <tool-group grow>${t('grid trigrid | hash')}<combo-box class="gap" flat></combo-box>${t('delta')}<combo-box class="gap" flat></combo-box><ui-icon class="end" name="more" size="8"></ui-icon></tool-group>
    <tool-group>${t('mask')}<ui-icon name="more" size="8"></ui-icon></tool-group>
  </div>
  <div class="work">
    <div class="left"><dock-title text="Panels" actions="float"></dock-title><panel-tabs></panel-tabs><shape-panel></shape-panel></div>
    <div class="mid"><view-port></view-port><dock-title text="Messages" actions="float,x"></dock-title><textarea aria-label="Messages" readonly></textarea></div>
    <side-column back icons="selplus selminus toggle cross angle | nodesup nodesdown loop stack | selwave selgear bars | rotate"></side-column>
    <side-column icons="px mx py my pz mz | nhat | globe eplane ecurve epoints esurf estar egrid eaxr eaxb ecube ecross"></side-column>
  </div>
  <status-bar></status-bar>`;
  });
</script>
</body>
</html>
